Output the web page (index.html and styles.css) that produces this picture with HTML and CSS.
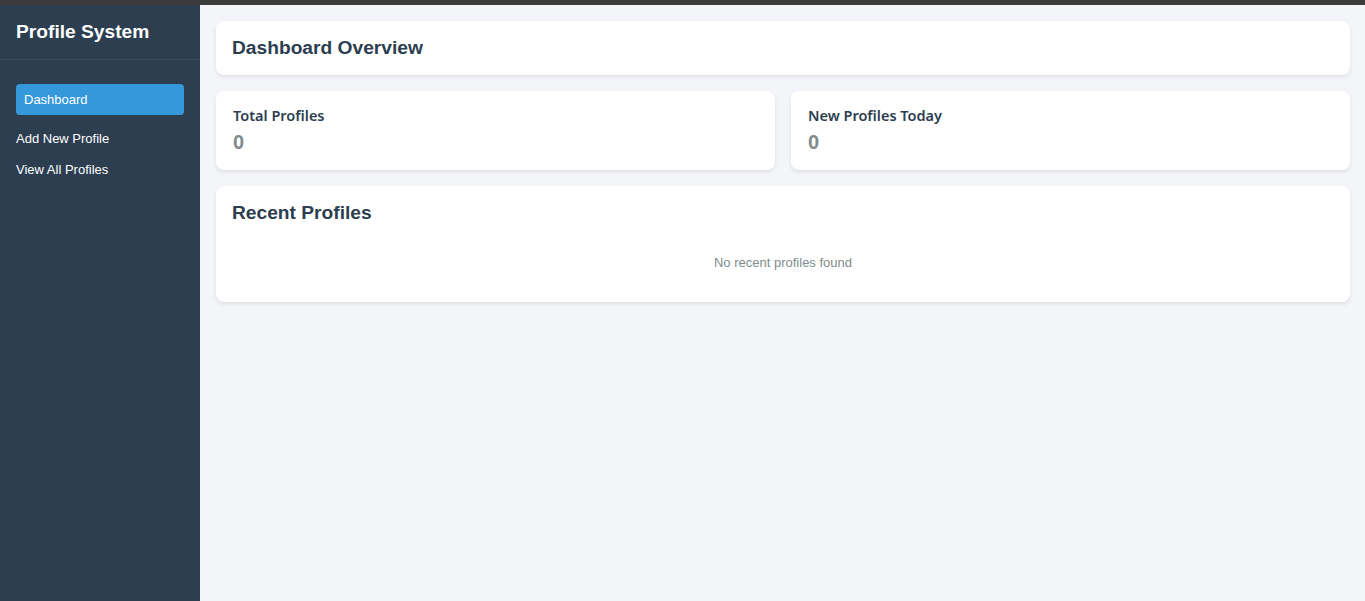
FILE: index.html
```html
<!DOCTYPE html>
<html lang="en">
<head>
<meta charset="utf-8">
<title>Profile System</title>
<link rel="stylesheet" href="styles.css">
</head>
<body>
<div class="topbar"></div>
<div class="layout">
  <aside class="sidebar">
    <div class="brand">Profile System</div>
    <ul class="nav">
      <li class="nav-item current"><a class="nav-link active" href="#">Dashboard</a></li>
      <li class="nav-item"><a class="nav-link" href="#">Add New Profile</a></li>
      <li class="nav-item"><a class="nav-link" href="#">View All Profiles</a></li>
    </ul>
  </aside>
  <main class="main">
    <section class="card header-card">
      <h1 class="page-title">Dashboard Overview</h1>
    </section>
    <div class="stats">
      <section class="card stat-card">
        <h3 class="stat-label">Total Profiles</h3>
        <div class="stat-value">0</div>
      </section>
      <section class="card stat-card">
        <h3 class="stat-label">New Profiles Today</h3>
        <div class="stat-value">0</div>
      </section>
    </div>
    <section class="card recent-card">
      <h2 class="section-title">Recent Profiles</h2>
      <p class="empty">No recent profiles found</p>
    </section>
  </main>
</div>
</body>
</html>
```

FILE: styles.css
```css
* { box-sizing: border-box; }
html, body { margin: 0; padding: 0; height: 100%; }
body {
  font-family: "Liberation Sans", Arial, sans-serif;
  background: #f4f5f9;
  color: #2c3e50;
  display: flex;
  flex-direction: column;
  overflow: hidden;
}
.topbar { height: 5px; background: #3b3b3b; flex: none; }
.layout { display: flex; flex: 1; min-height: 0; }
.sidebar {
  width: 200px;
  flex: none;
  background: #2c3e50;
  color: #ffffff;
}
.brand {
  padding: 16px;
  font-size: 19.2px;
  line-height: 22px;
  font-weight: bold;
  border-bottom: 1px solid #3a4b5d;
}
.nav {
  list-style: none;
  margin: 0;
  padding: 24px 16px;
}
.nav-item { margin-bottom: 15px; }
.nav-item.current { margin-bottom: 16px; }
.nav-link {
  display: block;
  color: #ffffff;
  text-decoration: none;
  font-size: 13px;
  line-height: 16px;
}
.nav-link.active {
  background: #3498db;
  border-radius: 4px;
  padding: 8px 8px 7px;
}
.main {
  flex: 1;
  padding: 16px 15px 16px 16px;
  display: flex;
  flex-direction: column;
  gap: 16px;
}
.card {
  background: #ffffff;
  border-radius: 8px;
  box-shadow: 0 2px 4px rgba(0, 0, 0, 0.09);
  padding: 16px;
}
.page-title {
  margin: 0;
  font-size: 19.2px;
  line-height: 22px;
  font-weight: bold;
  color: #2c3e50;
}
.stats {
  display: grid;
  grid-template-columns: 1fr 1fr;
  gap: 16px;
}
.stat-card { padding: 16px 16px 16px 17px; }
.stat-label {
  margin: 0;
  font-family: "Noto Sans", "Open Sans", sans-serif;
  font-weight: 600;
  font-size: 14.5px;
  line-height: 17px;
  color: #2c3e50;
}
.stat-value {
  margin-top: 6px;
  font-size: 20px;
  line-height: 24px;
  font-weight: bold;
  color: #7f8c8d;
}
.section-title {
  margin: 0;
  font-size: 19.2px;
  line-height: 22px;
  font-weight: bold;
  color: #2c3e50;
}
.empty {
  margin: 16px 0 0;
  padding: 15px 0;
  text-align: center;
  font-size: 13px;
  line-height: 16px;
  color: #7f8c8d;
}
```
